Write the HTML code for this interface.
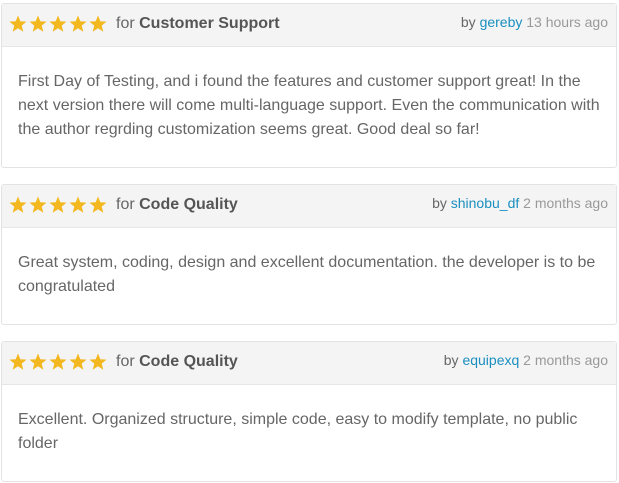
<html><head><style>
body{margin:0;background:#fff;font-family:"Liberation Sans",sans-serif;}
.card{position:absolute;left:1px;width:616px;border:1px solid #e3e3e3;border-radius:3px;background:#fff;box-sizing:border-box}
.hd{height:42px;background:#f4f4f4;border-bottom:1px solid #e6e6e6;position:relative}
.stars{position:absolute;left:7px;top:11px;height:18px}
.for{position:absolute;left:114px;top:11px;font-size:16px;color:#666}
.for b{color:#555}
.by{position:absolute;right:8px;top:10px;font-size:14px;color:#999}
.by span.b{color:#666}.by a{color:#1a8fc0;text-decoration:none}
.bd{padding:23px 14px 0 16px;font-size:16px;line-height:24px;color:#666}
</style></head><body>
<svg width="0" height="0" style="position:absolute"><defs><path id="s" d="M9 0.5L11.3 6.3L17.5 6.6L12.7 10.6L14.3 16.7L9 13.3L3.7 16.7L5.3 10.6L0.5 6.6L6.7 6.3Z" fill="#f3b81f"/></defs></svg>
<div class="card" style="top:3px;height:165px"><div class="hd"><svg class="stars" width="100" height="18"><use href="#s"/><use href="#s" x="20"/><use href="#s" x="40"/><use href="#s" x="60"/><use href="#s" x="80"/></svg><div class="for">for <b>Customer Support</b></div><div class="by"><span class="b">by</span> <a>gereby</a> 13 hours ago</div></div>
<div class="bd">First Day of Testing, and i found the features and customer support great! In the next version there will come multi-language support. Even the communication with the author regrding customization seems great. Good deal so far!</div></div>
<div class="card" style="top:184px;height:141px"><div class="hd"><svg class="stars" width="100" height="18"><use href="#s"/><use href="#s" x="20"/><use href="#s" x="40"/><use href="#s" x="60"/><use href="#s" x="80"/></svg><div class="for">for <b>Code Quality</b></div><div class="by"><span class="b">by</span> <a>shinobu_df</a> 2 months ago</div></div>
<div class="bd">Great system, coding, design and excellent documentation. the developer is to be congratulated</div></div>
<div class="card" style="top:341px;height:141px"><div class="hd"><svg class="stars" width="100" height="18"><use href="#s"/><use href="#s" x="20"/><use href="#s" x="40"/><use href="#s" x="60"/><use href="#s" x="80"/></svg><div class="for">for <b>Code Quality</b></div><div class="by"><span class="b">by</span> <a>equipexq</a> 2 months ago</div></div>
<div class="bd">Excellent. Organized structure, simple code, easy to modify template, no public folder</div></div>
</body></html>
